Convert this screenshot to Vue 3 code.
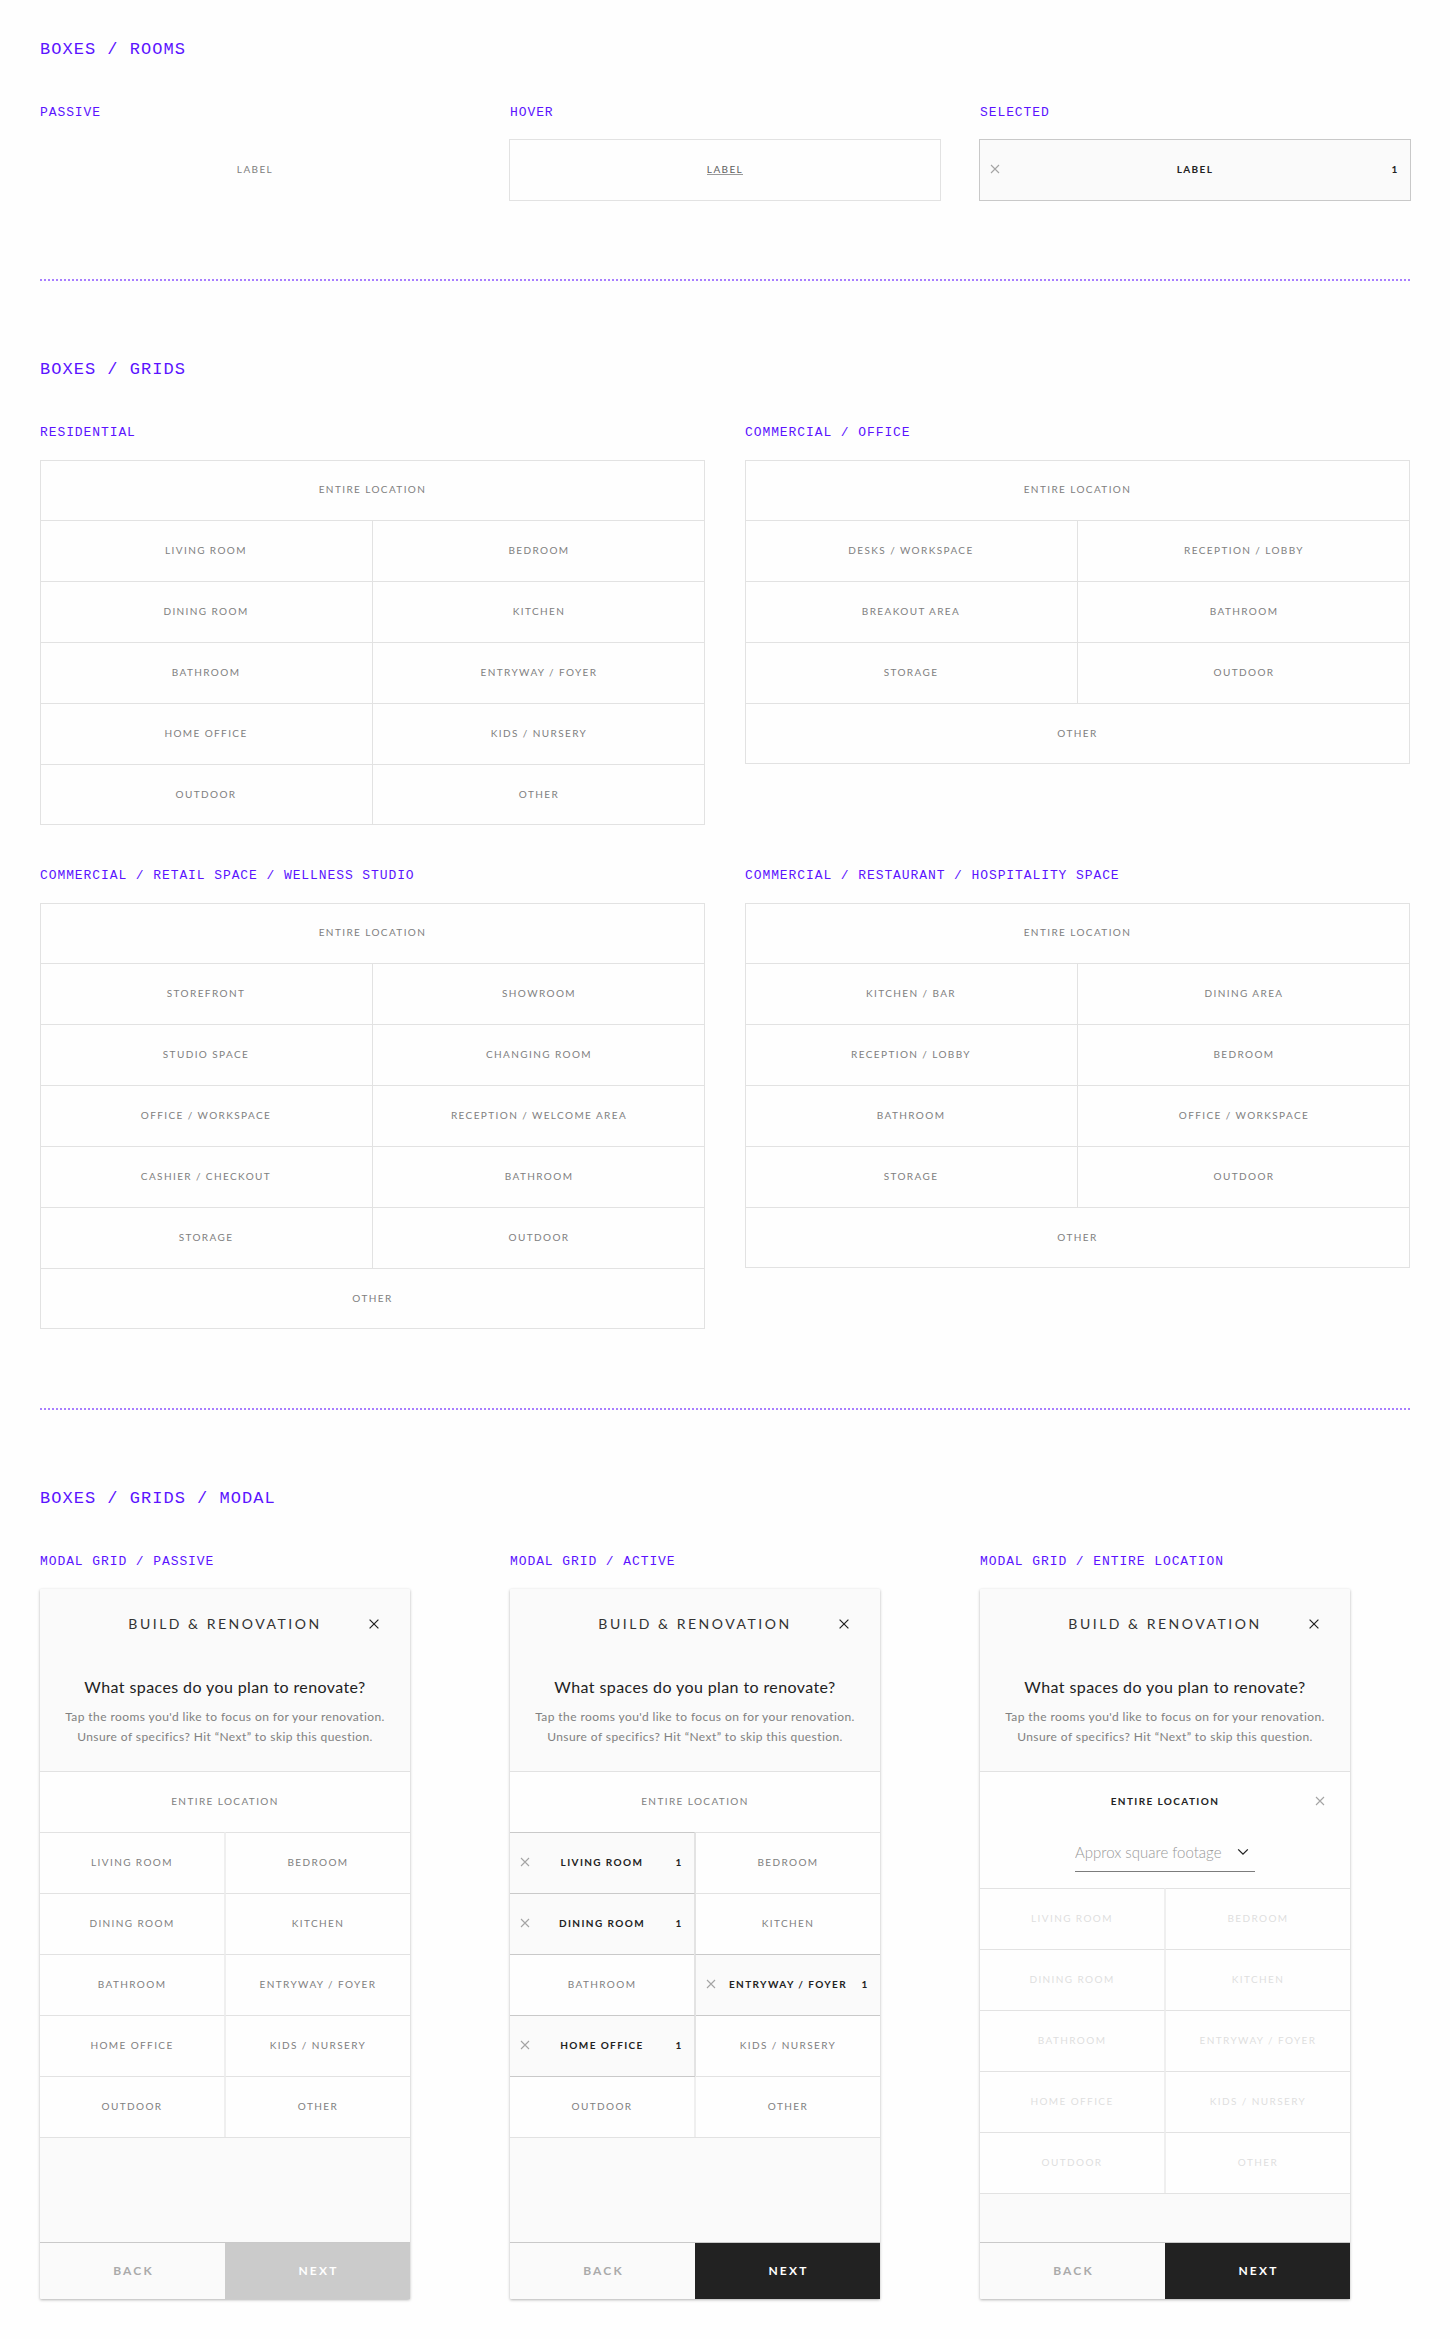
<script setup>
import { ref } from 'vue'

const grids = [
  {
    title: 'Residential',
    rooms: ['Entire location', 'Living room', 'Bedroom', 'Dining room', 'Kitchen', 'Bathroom', 'Entryway / Foyer', 'Home office', 'Kids / Nursery', 'Outdoor', 'Other'],
  },
  {
    title: 'Commercial / Office',
    rooms: ['Entire location', 'Desks / Workspace', 'Reception / Lobby', 'Breakout area', 'Bathroom', 'Storage', 'Outdoor', 'Other'],
  },
  {
    title: 'Commercial / Retail space / Wellness studio',
    rooms: ['Entire location', 'Storefront', 'Showroom', 'Studio space', 'Changing room', 'Office / Workspace', 'Reception / Welcome area', 'Cashier / Checkout', 'Bathroom', 'Storage', 'Outdoor', 'Other'],
  },
  {
    title: 'Commercial / Restaurant / Hospitality space',
    rooms: ['Entire location', 'Kitchen / Bar', 'Dining area', 'Reception / Lobby', 'Bedroom', 'Bathroom', 'Office / Workspace', 'Storage', 'Outdoor', 'Other'],
  },
]

const modalRooms = grids[0].rooms.slice(1)

const modals = [
  { title: 'Modal grid / Passive', selected: [], entire: false, ready: false },
  { title: 'Modal grid / Active', selected: ['Living room', 'Dining room', 'Entryway / Foyer', 'Home office'], entire: false, ready: true },
  { title: 'Modal grid / Entire location', selected: [], entire: true, ready: true },
]

const footage = ref('')

// The first room always spans the row; the last does when it is left alone in one.
const isWide = (rooms, i) => i === 0 || (i === rooms.length - 1 && i % 2 === 1)
</script>

<template>
  <main class="page">
    <section class="section">
      <h1>Boxes / Rooms</h1>
      <div class="thirds">
        <div>
          <h2>Passive</h2>
          <button type="button" class="room"><span class="label">Label</span></button>
        </div>
        <div>
          <h2>Hover</h2>
          <button type="button" class="room framed hovered"><span class="label">Label</span></button>
        </div>
        <div>
          <h2>Selected</h2>
          <button type="button" class="room framed selected" aria-pressed="true">
            <svg class="cross" viewBox="0 0 10 10" aria-hidden="true"><path d="M1 1L9 9M9 1L1 9" /></svg>
            <span class="label">Label</span>
            <span class="count">1</span>
          </button>
        </div>
      </div>
    </section>

    <hr />

    <section class="section">
      <h1>Boxes / Grids</h1>
      <div class="halves">
        <div v-for="grid in grids" :key="grid.title">
          <h2>{{ grid.title }}</h2>
          <div class="grid">
            <button
              v-for="(room, i) in grid.rooms"
              :key="room"
              type="button"
              class="room"
              :class="{ wide: isWide(grid.rooms, i) }"
            >
              <span class="label">{{ room }}</span>
            </button>
          </div>
        </div>
      </div>
    </section>

    <hr />

    <section class="section">
      <h1>Boxes / Grids / Modal</h1>
      <div class="thirds">
        <div v-for="modal in modals" :key="modal.title">
          <h2>{{ modal.title }}</h2>
          <article class="modal">
            <header class="bar">
              <h3>Build &amp; Renovation</h3>
              <button type="button" class="close" aria-label="Close">
                <svg viewBox="0 0 10 10" aria-hidden="true"><path d="M.6 .6L9.4 9.4M9.4 .6L.6 9.4" /></svg>
              </button>
            </header>
            <div class="intro">
              <h4>What spaces do you plan to renovate?</h4>
              <p>Tap the rooms you'd like to focus on for your renovation.<br />Unsure of specifics? Hit “Next” to skip this question.</p>
            </div>

            <div v-if="modal.entire" class="entire">
              <button type="button" class="room entire-room" aria-pressed="true">
                <span class="label">Entire location</span>
                <svg class="cross" viewBox="0 0 10 10" aria-hidden="true"><path d="M1 1L9 9M9 1L1 9" /></svg>
              </button>
              <div class="field">
                <select v-model="footage" aria-label="Approx square footage">
                  <option value="">Approx square footage</option>
                </select>
                <svg class="chevron" viewBox="0 0 12 8" aria-hidden="true"><path d="M1.2 1.4L6 6.2L10.8 1.4" /></svg>
              </div>
            </div>
            <button v-else type="button" class="room top-room"><span class="label">Entire location</span></button>

            <div class="modal-grid">
              <button
                v-for="room in modalRooms"
                :key="room"
                type="button"
                class="room"
                :class="{ selected: modal.selected.includes(room) }"
                :disabled="modal.entire"
              >
                <template v-if="modal.selected.includes(room)">
                  <svg class="cross" viewBox="0 0 10 10" aria-hidden="true"><path d="M1 1L9 9M9 1L1 9" /></svg>
                  <span class="label">{{ room }}</span>
                  <span class="count">1</span>
                </template>
                <span v-else class="label">{{ room }}</span>
              </button>
            </div>

            <footer class="actions">
              <button type="button" class="back">Back</button>
              <button type="button" class="next" :disabled="!modal.ready">Next</button>
            </footer>
          </article>
        </div>
      </div>
    </section>
  </main>
</template>

<style>
body {
  margin: 0;
  background: #fefefe;
}
</style>

<style scoped>
.page {
  padding: 40px;
  font-family: Lato, "Liberation Sans", sans-serif;
  color: #222;
}

h1,
h2,
h3,
h4,
p {
  margin: 0;
  font-weight: 400;
}

h1,
h2 {
  font-family: "Liberation Mono", monospace;
  text-transform: uppercase;
  color: #5b13ff;
}

h1 {
  margin-bottom: 45px;
  font-size: 17px;
  line-height: 20px;
  letter-spacing: 0.06em;
}

h2 {
  margin-bottom: 19px;
  font-size: 13px;
  line-height: 16px;
  letter-spacing: 0.07em;
}

hr {
  height: 2px;
  margin: 79px 0;
  border: 0;
  background: repeating-linear-gradient(90deg, #a87fff 0 2px, transparent 2px 4px);
}

.thirds {
  display: grid;
  grid-template-columns: repeat(3, minmax(0, 1fr));
  gap: 40px;
}

.halves {
  display: grid;
  grid-template-columns: repeat(2, minmax(0, 1fr));
  gap: 43px 40px;
}

button {
  margin: 0;
  padding: 0;
  border: 0;
  border-radius: 0;
  background: none;
  font: inherit;
  color: inherit;
  cursor: pointer;
}

.room {
  display: grid;
  grid-template-columns: 30px 1fr 30px;
  align-items: center;
  justify-items: center;
  width: 100%;
  height: 60px;
  padding-bottom: 2px;
  background: #fefefe;
  font-size: 10px;
  line-height: 14px;
  letter-spacing: 0.14em;
  text-transform: uppercase;
  white-space: nowrap;
  color: #808080;
}

.label {
  grid-column: 2;
}

.framed {
  outline: 1px solid #e2e2e2;
}

.hovered {
  color: #606060;
}

.hovered .label {
  border-bottom: 1px solid #999;
  line-height: 10px;
}

.selected {
  background: #fafafa;
  color: #222;
  font-weight: 700;
}

.framed.selected {
  outline-color: #c9c9c9;
}

.count {
  font-weight: 700;
}

.cross {
  width: 10px;
  height: 10px;
  fill: none;
  stroke: #a4a4a4;
  stroke-width: 1.1;
}

.grid {
  display: grid;
  grid-template-columns: 1fr 1fr;
  gap: 1px;
  background: #e2e2e2;
  outline: 1px solid #e2e2e2;
  outline-offset: -1px;
}

.wide {
  grid-column: 1 / -1;
}

.modal {
  display: flex;
  flex-direction: column;
  max-width: 370px;
  min-height: 710px;
  border-radius: 1px;
  background: #fafafa;
  box-shadow: 0 1px 3px rgba(0, 0, 0, 0.3);
}

.bar {
  display: grid;
  grid-template-columns: 72px 1fr 72px;
  align-items: center;
  justify-items: center;
  height: 70px;
}

h3 {
  grid-column: 2;
  font-size: 14px;
  line-height: 20px;
  letter-spacing: 0.18em;
  text-transform: uppercase;
  white-space: nowrap;
  color: #333;
}

.close {
  display: flex;
  padding: 8px;
}

.close svg {
  width: 10px;
  height: 10px;
  fill: none;
  stroke: #222;
  stroke-width: 1.2;
}

.intro {
  padding: 16px 8px 24px;
  text-align: center;
  white-space: nowrap;
}

h4 {
  margin-bottom: 8px;
  font-size: 16px;
  line-height: 24px;
  letter-spacing: 0.025em;
}

p {
  font-size: 12px;
  line-height: 20px;
  letter-spacing: 0.035em;
  color: #808080;
}

.top-room,
.entire {
  box-sizing: content-box;
  border-top: 1px solid #e2e2e2;
  background: #fefefe;
}

.top-room {
  height: 58px;
}

.entire {
  padding-bottom: 16px;
}

.entire-room {
  grid-template-columns: 60px 1fr 60px;
  color: #222;
  font-weight: 700;
}

.field {
  position: relative;
  width: 180px;
  margin: 0 auto;
}

select {
  display: block;
  width: 100%;
  height: 40px;
  padding: 0 30px 0 0;
  border: 0;
  border-bottom: 1px solid #7c7c7c;
  border-radius: 0;
  background: none;
  appearance: none;
  font: 300 15px/20px Lato, "Liberation Sans", sans-serif;
  color: #999;
}

.chevron {
  position: absolute;
  top: 16px;
  right: 6px;
  width: 12px;
  height: 8px;
  fill: none;
  stroke: #222;
  stroke-width: 1.3;
  pointer-events: none;
}

.modal-grid {
  display: grid;
  grid-template-columns: 1fr 1fr;
  border-bottom: 1px solid #e2e2e2;
}

.modal-grid .room {
  box-sizing: border-box;
  width: auto;
  height: 61px;
  border-top: 1px solid #e2e2e2;
}

.modal-grid .room:nth-child(odd) {
  border-right: 1px solid #efefef;
}

.modal-grid .room:nth-child(even) {
  border-left: 1px solid #efefef;
}

.modal-grid .selected {
  position: relative;
  border-color: #c9c9c9 #e3e3e3;
}

.modal-grid .selected:nth-child(odd) {
  border-right-color: #e3e3e3;
  box-shadow: 0 1px #c9c9c9, 1px 0 #e3e3e3;
}

.modal-grid .selected:nth-child(even) {
  border-left-color: #e3e3e3;
  box-shadow: 0 1px #c9c9c9, -1px 0 #e3e3e3;
}

.modal-grid .room:disabled {
  color: #dedede;
  cursor: default;
}

.actions {
  display: grid;
  grid-template-columns: 1fr 1fr;
  height: 56px;
  margin-top: auto;
  border-top: 1px solid #c9c9c9;
  font-size: 12px;
  font-weight: 700;
  letter-spacing: 0.18em;
}

.actions button {
  padding: 0 0 2px 2px;
  text-transform: uppercase;
  letter-spacing: inherit;
}

.back {
  color: #aaa;
}

.next {
  background: #222;
  color: #fff;
}

.next:disabled {
  background: #cbcbcb;
}
</style>
